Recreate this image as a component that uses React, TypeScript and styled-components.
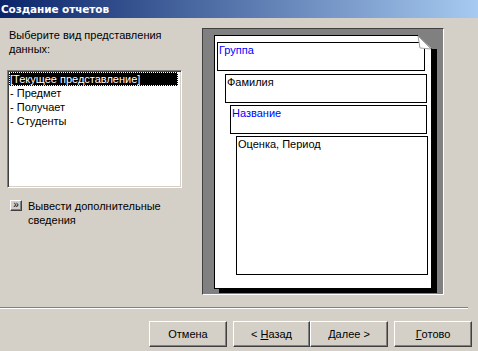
import styled, { createGlobalStyle } from 'styled-components';

const GlobalStyle = createGlobalStyle`
  html, body {
    margin: 0;
    padding: 0;
    background: #d4d0c8;
  }
  body {
    font-family: "Liberation Sans", Arial, sans-serif;
    font-size: 11px;
    color: #000;
  }
`;

const Window = styled.div`
  width: 478px;
  height: 351px;
  display: flex;
  flex-direction: column;
  background: #d4d0c8;
  overflow: hidden;
`;

const TitleBar = styled.div`
  height: 18px;
  flex: none;
  display: flex;
  align-items: center;
  padding-left: 1px;
  background: linear-gradient(to right, #0a246a 0%, #a6caf0 100%);
  color: #fff;
  font-family: "DejaVu Sans", sans-serif;
  font-weight: bold;
  font-size: 10.5px;
  letter-spacing: -0.1px;
`;

const Body = styled.div`
  flex: none;
  height: 289px;
  display: flex;
  padding: 10px 0 0 7px;
  box-sizing: border-box;
`;

const LeftColumn = styled.div`
  width: 195px;
  display: flex;
  flex-direction: column;
`;

const Label = styled.div`
  margin-left: 2px;
  line-height: 14px;
  width: 170px;
`;

const ListBox = styled.div`
  margin-top: 14px;
  width: 175px;
  height: 118px;
  box-sizing: border-box;
  background: #fff;
  border-style: solid;
  border-width: 1px;
  border-color: #808080 #fff #fff #808080;
  box-shadow: inset 1px 1px 0 #404040, inset -1px -1px 0 #d4d0c8;
  padding: 1px 3px 1px 1px;
`;

const ListItem = styled.div<{ $selected?: boolean }>`
  height: 14px;
  line-height: 14px;
  padding-left: 1px;
  white-space: nowrap;
  background: ${(p) => (p.$selected ? '#000' : 'transparent')};
  color: ${(p) => (p.$selected ? '#fff' : '#000')};
  outline: ${(p) => (p.$selected ? '1px dotted #fff' : 'none')};
  outline-offset: -1px;
`;

const MoreRow = styled.div`
  margin-top: 11px;
  margin-left: 3px;
  display: flex;
  align-items: flex-start;
  gap: 6px;
`;

const SmallButton = styled.div`
  width: 12px;
  height: 11px;
  margin-top: 1px;
  box-sizing: border-box;
  background: #d4d0c8;
  border-style: solid;
  border-width: 1px;
  border-color: #fff #404040 #404040 #fff;
  box-shadow: inset -1px -1px 0 #808080;
  display: flex;
  align-items: center;
  justify-content: center;
  font-size: 10px;
  line-height: 8px;
  padding-bottom: 1px;
`;

const MoreText = styled.div`
  line-height: 14px;
  width: 150px;
`;

const PreviewPanel = styled.div`
  width: 242px;
  height: 267px;
  box-sizing: border-box;
  background: #808080;
  border-style: solid;
  border-width: 1px;
  border-color: #404040 #fff #fff #404040;
  padding: 6px 0 0 11px;
`;

const Page = styled.div`
  position: relative;
  width: 218px;
  height: 254px;
  box-sizing: border-box;
  background: #fff;
  border: 1px solid #000;
  box-shadow: 5px 4px 0 #000;
  display: flex;
  flex-direction: column;
  align-items: flex-start;
  padding: 6px 0 0 2px;
`;

const Corner = styled.svg`
  position: absolute;
  top: -1px;
  right: -6px;
`;

const Section = styled.div<{ $indent: number; $width: number; $height: number; $blue?: boolean; $gap: number }>`
  margin-left: ${(p) => p.$indent}px;
  margin-top: ${(p) => p.$gap}px;
  width: ${(p) => p.$width}px;
  height: ${(p) => p.$height}px;
  box-sizing: border-box;
  border: 1px solid #000;
  padding: 1px 1px;
  line-height: 13px;
  color: ${(p) => (p.$blue ? '#0000ff' : '#000')};
`;

const Separator = styled.div`
  flex: none;
  margin: 0 10px 0 0;
  height: 0;
  border-top: 1px solid #808080;
  border-bottom: 1px solid #fff;
`;

const Footer = styled.div`
  display: flex;
  justify-content: flex-end;
  padding: 12px 6px 0 0;
`;

const ButtonGroup = styled.div`
  display: flex;
`;

const Button = styled.div<{ $width: number }>`
  width: ${(p) => p.$width}px;
  height: 26px;
  box-sizing: border-box;
  background: #d4d0c8;
  border-style: solid;
  border-width: 1px;
  border-color: #fff #404040 #404040 #fff;
  box-shadow: inset -1px -1px 0 #808080;
  display: flex;
  align-items: center;
  justify-content: center;
  white-space: nowrap;
  u {
    text-decoration: underline;
  }
`;

const Gap = styled.div<{ $w: number }>`
  width: ${(p) => p.$w}px;
`;

export default function App() {
  return (
    <>
      <GlobalStyle />
      <Window>
        <TitleBar>Создание отчетов</TitleBar>
        <Body>
          <LeftColumn>
            <Label>Выберите вид представления данных:</Label>
            <ListBox>
              <ListItem $selected>[Текущее представление]</ListItem>
              <ListItem>- Предмет</ListItem>
              <ListItem>- Получает</ListItem>
              <ListItem>- Студенты</ListItem>
            </ListBox>
            <MoreRow>
              <SmallButton>»</SmallButton>
              <MoreText>Вывести дополнительные сведения</MoreText>
            </MoreRow>
          </LeftColumn>
          <PreviewPanel>
            <Page>
              <Corner width="20" height="18" viewBox="0 0 20 18">
                <polygon points="0,0 20,0 20,14 15,14" fill="#808080" />
                <polygon points="1,1 14,14 3,13" fill="#fff" stroke="#a0a0a0" strokeWidth="1" />
                <line x1="0.5" y1="0" x2="0.5" y2="1" stroke="#000" />
              </Corner>
              <Section $indent={0} $gap={0} $width={208} $height={29} $blue>
                Группа
              </Section>
              <Section $indent={8} $gap={3} $width={202} $height={29}>
                Фамилия
              </Section>
              <Section $indent={13} $gap={2} $width={197} $height={29} $blue>
                Название
              </Section>
              <Section $indent={19} $gap={2} $width={192} $height={139}>
                Оценка, Период
              </Section>
            </Page>
          </PreviewPanel>
        </Body>
        <Separator />
        <Footer>
          <Button $width={78}>Отмена</Button>
          <Gap $w={6} />
          <ButtonGroup>
            <Button $width={77}>
              &lt;&nbsp;<u>Н</u>азад
            </Button>
            <Button $width={78}>
              <u>Д</u>алее&nbsp;&gt;
            </Button>
          </ButtonGroup>
          <Gap $w={6} />
          <Button $width={78}>
            <u>Г</u>отово
          </Button>
        </Footer>
      </Window>
    </>
  );
}
